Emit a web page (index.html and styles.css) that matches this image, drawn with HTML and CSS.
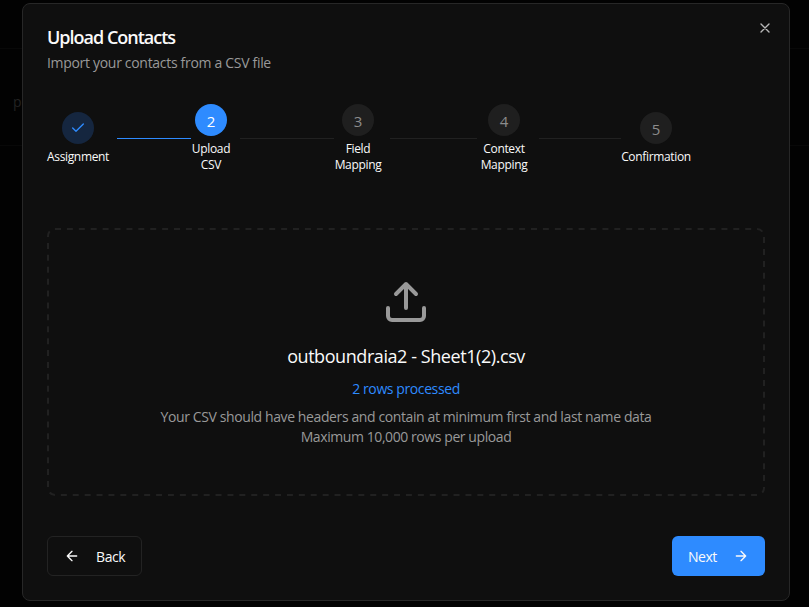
FILE: index.html
```html
<!DOCTYPE html>
<html lang="en">
<head>
<meta charset="utf-8">
<title>Upload Contacts</title>
<link rel="stylesheet" href="styles.css">
</head>
<body>
<div class="page" aria-hidden="true"><div class="page-top"></div><div class="page-row"><span>p</span></div></div>
<main class="dialog">
  <button class="close" aria-label="Close"><svg width="16" height="16" viewBox="0 0 24 24"><path d="M18 6 6 18M6 6l12 12"/></svg></button>
  <header>
    <h1>Upload Contacts</h1>
    <p class="subtitle">Import your contacts from a CSV file</p>
  </header>
  <div class="steps">
    <div class="step"><div class="dot done"><svg width="16" height="16" viewBox="0 0 24 24"><path d="M20 6 9 17l-5-5"/></svg></div><div class="label">Assignment</div></div>
    <i class="line active"></i>
    <div class="step"><div class="dot current">2</div><div class="label">Upload<br>CSV</div></div>
    <i class="line"></i>
    <div class="step"><div class="dot">3</div><div class="label">Field<br>Mapping</div></div>
    <i class="line"></i>
    <div class="step"><div class="dot">4</div><div class="label">Context<br>Mapping</div></div>
    <i class="line"></i>
    <div class="step"><div class="dot">5</div><div class="label">Confirmation</div></div>
  </div>
  <section class="drop">
    <svg class="outline" width="718" height="268"><rect x="1" y="1" width="716" height="266" rx="7"/></svg>
    <svg class="upload" width="48" height="48" viewBox="0 0 24 24"><path d="M21 15v4a2 2 0 0 1-2 2H5a2 2 0 0 1-2-2v-4M17 8l-5-5-5 5M12 3v12"/></svg>
    <p class="file">outboundraia2 - Sheet1(2).csv</p>
    <p class="rows">2 rows processed</p>
    <p class="hint hint-main">Your CSV should have headers and contain at minimum first and last name data</p>
    <p class="hint">Maximum 10,000 rows per upload</p>
  </section>
  <footer>
    <button class="btn back"><svg width="16" height="16" viewBox="0 0 24 24"><path d="m12 19-7-7 7-7M19 12H5"/></svg><span>Back</span></button>
    <button class="btn next"><span>Next</span><svg width="16" height="16" viewBox="0 0 24 24"><path d="M5 12h14M12 5l7 7-7 7"/></svg></button>
  </footer>
</main>
</body>
</html>
```
FILE: styles.css
```css
* { box-sizing: border-box; }
body { margin: 0; height: 607px; overflow: hidden; background: #020202; color: #fafafa; font: 14px/20px "Segoe UI", "Open Sans", "Noto Sans", sans-serif; position: relative; }
h1, p { margin: 0; white-space: nowrap; }
svg { fill: none; stroke: currentColor; stroke-width: 2; stroke-linecap: round; stroke-linejoin: round; flex: none; display: block; }
button { font: inherit; color: inherit; background: none; border: 0; padding: 0; }
.page { position: absolute; inset: 0; }
.page-top { height: 49px; border-bottom: 1px solid #080808; }
.page-row { height: 97px; border-bottom: 1px solid #080808; padding: 43px 0 0 13px; color: #222; }
.dialog { position: relative; width: 768px; height: 598px; margin: 3px 0 0 22px; padding: 24px; border: 1px solid #272727; border-radius: 8px; background: #0f0f0f; display: flex; flex-direction: column; }
.close { position: absolute; right: 16px; top: 16px; color: #b8b8b8; }
header { height: 76px; }
h1 { font-size: 18px; line-height: 18px; font-weight: 600; letter-spacing: -1px; }
.subtitle { margin-top: 7px; color: #999; letter-spacing: -.31px; }
.steps { display: grid; grid-template-columns: 70px 74px 49px 94px 56px 87px 62px 82px 70px; align-items: center; height: 69px; }
.step { display: flex; flex-direction: column; align-items: center; gap: 4px; }
.step:nth-child(1) { width: 62px; }
.step:nth-child(3) { width: 40px; }
.step:nth-child(5) { width: 48px; }
.step:nth-child(7) { width: 54px; }
.dot { width: 32px; height: 32px; border-radius: 50%; display: flex; align-items: center; justify-content: center; background: #1f1f1f; color: #8c8c8c; padding-top: 2px; font-size: 15px; }
.dot.done { background: #15263f; color: #2e8bff; padding: 0; }
.dot.current { background: #2e8bff; color: #fff; }
.label { font-size: 12px; line-height: 16px; text-align: center; white-space: nowrap; letter-spacing: -.34px; padding-top: 1px; }
.line { height: 1px; background: #212121; }
.line.active { background: #2e8bff; }
.drop { position: relative; margin-top: 55px; height: 268px; display: flex; flex-direction: column; align-items: center; padding-top: 50px; }
.outline { position: absolute; left: 0; top: 0; color: #212121; stroke-dasharray: 6 5.9; stroke-linecap: butt; }
.upload { color: #999; }
.file { margin-top: 16px; font-size: 18px; line-height: 28px; letter-spacing: -.43px; }
.rows { margin-top: 9px; color: #2e8bff; letter-spacing: -.4px; }
.hint { color: #999; letter-spacing: -.42px; }
.hint-main { margin-top: 8px; letter-spacing: -.39px; }
footer { margin-top: 40px; display: flex; justify-content: space-between; }
.btn { height: 40px; border-radius: 6px; display: flex; align-items: center; justify-content: space-between; padding: 0 16px; }
.btn span { padding-top: 2px; letter-spacing: -.5px; }
.back { width: 95px; border: 1px solid #232323; }
.next { width: 93px; background: #2e8bff; }
```
